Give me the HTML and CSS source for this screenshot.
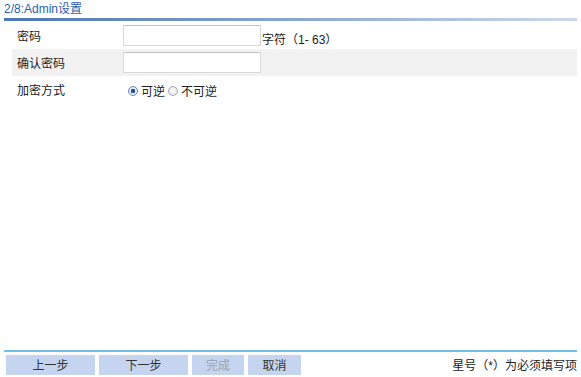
FILE: index.html
```html
<!DOCTYPE html>
<html lang="zh-CN">
<head>
  <meta charset="UTF-8">
  <title>Admin设置</title>
  <link rel="stylesheet" href="styles.css">
</head>
<body>
  <div class="page">
    <div class="title">2/8:Admin设置</div>
    <div class="title-line"></div>

    <div class="form">
      <div class="row">
        <div class="label">密码</div>
        <div class="field">
          <input type="password" class="text-input">
          <span class="hint">字符（1- 63）</span>
        </div>
      </div>
      <div class="row alt">
        <div class="label">确认密码</div>
        <div class="field">
          <input type="password" class="text-input">
        </div>
      </div>
      <div class="row">
        <div class="label">加密方式</div>
        <div class="field radios">
          <label class="radio"><span class="dot checked"></span>可逆</label>
          <label class="radio"><span class="dot"></span>不可逆</label>
        </div>
      </div>
    </div>

    <div class="footer">
      <div class="buttons">
        <button class="btn wide">上一步</button>
        <button class="btn wide">下一步</button>
        <button class="btn disabled">完成</button>
        <button class="btn">取消</button>
      </div>
      <div class="note">星号（*）为必须填写项</div>
    </div>
  </div>
</body>
</html>
```

FILE: styles.css
```css
* {
  box-sizing: border-box;
}

body {
  margin: 0;
  background: #fff;
  font-family: "Liberation Sans", "Noto Sans CJK SC", sans-serif;
  font-size: 12px;
  color: #222;
}

.page {
  width: 581px;
  height: 377px;
  display: flex;
  flex-direction: column;
}

.title {
  color: #2a5ea8;
  height: 18px;
  line-height: 18px;
  padding-left: 4px;
}

.title-line {
  height: 3px;
  margin: 0 4px;
  background: linear-gradient(to right, #4a76b2, #8aa6cf 50%, #cdd8ea);
}

.form {
  flex: 1;
  padding: 1px 0 0 12px;
  margin-right: 4px;
}

.row {
  display: flex;
  align-items: center;
  height: 27px;
}

.row.alt {
  background: #f2f2f2;
}

.label {
  width: 111px;
  padding-left: 5px;
}

.field {
  display: flex;
  align-items: center;
}

.text-input {
  width: 138px;
  height: 21px;
  border: 1px solid #d8d8d8;
  border-top-color: #c4c4c4;
  background: #fff;
  margin: 0;
}

.hint {
  margin-top: 5px;
  margin-left: 1px;
}

.radios {
  padding-left: 5px;
  gap: 3px;
  margin-top: 2px;
}

.radio {
  display: flex;
  align-items: center;
}

.dot {
  width: 10px;
  height: 10px;
  border-radius: 50%;
  border: 1px solid #aab;
  background: radial-gradient(circle, #fff, #ddd);
  margin-right: 3px;
}

.dot.checked {
  border-color: #6a86b0;
  background: radial-gradient(circle, #2255a0 35%, #e4ecf6 45%);
}

.footer {
  border-top: 2px solid #6fc0e6;
  margin: 0 4px 2px;
  padding-top: 2px;
  display: flex;
  justify-content: space-between;
  align-items: center;
  height: 25px;
}

.buttons {
  display: flex;
  gap: 4px;
  padding-left: 2px;
}

.btn {
  height: 20px;
  width: 53px;
  border: none;
  background: #c5d5ef;
  color: #333;
  font-family: inherit;
  font-size: 12px;
  padding: 0;
}

.btn.wide {
  width: 89px;
}

.btn.disabled {
  color: #9aa2ae;
  width: 52px;
}
```
